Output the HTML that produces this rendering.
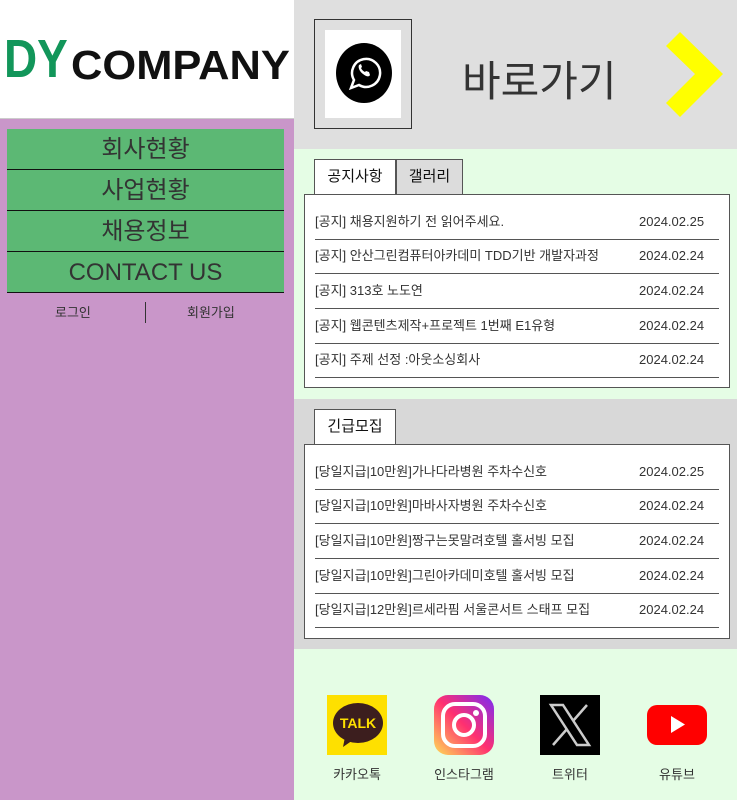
<!DOCTYPE html>
<html><head><meta charset="utf-8"><style>
*{margin:0;padding:0;box-sizing:border-box}
body{width:737px;height:800px;overflow:hidden;font-family:"Liberation Sans","Noto Sans CJK KR",sans-serif;color:#333;position:relative;background:#fff}
.abs{position:absolute}
.menu div{height:41px;border-bottom:1px solid #111;text-align:center;font-size:24px;line-height:42px;color:#333}
.row{position:absolute;left:10px;right:10px;height:35px;border-bottom:1px solid #555;font-size:13px}
.row span{position:absolute;top:9px;line-height:16px;height:16px}
.row .d{left:324px;top:9px}
.tab{position:absolute;height:36px;border:1px solid #555;border-bottom:none;font-size:15px;text-align:center;line-height:34px;color:#111}
.box{position:absolute;left:304px;width:426px;background:#fff;border:1px solid #555}
.lab{position:absolute;top:764px;font-size:13px;width:80px;text-align:center}
</style></head><body>
<div class="abs" style="left:0;top:0;width:294px;height:118px;background:#fff"></div>
<div class="abs" style="left:4px;top:32px;font-size:54px;line-height:54px;font-weight:bold;color:#12965a;transform:scaleX(0.85);transform-origin:0 0">DY</div>
<div class="abs" style="left:71px;top:45px;font-size:41px;line-height:41px;font-weight:bold;color:#111;transform:scaleX(1.06);transform-origin:0 0">COMPANY</div>
<div class="abs" style="left:0;top:118px;width:294px;height:682px;background:#c996c9;border-top:1px solid #ccc"></div>
<div class="abs menu" style="left:7px;top:129px;width:277px;background:#5cb874">
<div>회사현황</div><div>사업현황</div><div>채용정보</div><div>CONTACT US</div></div>
<div class="abs" style="left:55px;top:302px;font-size:13px">로그인</div>
<div class="abs" style="left:145px;top:302px;width:1px;height:21px;background:#333"></div>
<div class="abs" style="left:187px;top:302px;font-size:13px">회원가입</div>

<div class="abs" style="left:294px;top:0;width:443px;height:149px;background:#dfdfdf"></div>
<div class="abs" style="left:314px;top:19px;width:98px;height:110px;border:1px solid #333"></div>
<div class="abs" style="left:325px;top:30px;width:76px;height:88px;background:#fff"></div>
<svg class="abs" style="left:335px;top:42px" width="58" height="62" viewBox="0 0 58 62"><ellipse cx="29" cy="31" rx="28" ry="30" fill="#000"/><path d="M16 46l3-8a14 14 0 1 1 5 5z" fill="none" stroke="#fff" stroke-width="2.5"/><path d="M24 23c-1 2 0 6 4 9s6 3 7 1l-1-3-3-1-1 1c-2-1-3-2-4-4l1-1-1-3z" fill="#fff"/></svg>
<div class="abs" style="left:462px;top:48px;font-size:42px;color:#333">바로가기</div>
<svg class="abs" style="left:666px;top:32px" width="57" height="85"><path d="M0 14L14 0L57 42L14 85L0 71L29 42Z" fill="#ff0"/></svg>

<div class="abs" style="left:294px;top:149px;width:443px;height:250px;background:#e5fde5"></div>
<div class="tab" style="left:314px;top:159px;width:82px;background:#fff;height:37px">공지사항</div>
<div class="tab" style="left:396px;top:159px;width:67px;background:#dcdcdc">갤러리</div>
<div class="box" style="top:194px;height:194px">
<div class="row" style="top:10px"><span>[공지] 채용지원하기 전 읽어주세요.</span><span class="d">2024.02.25</span></div>
<div class="row" style="top:44px"><span>[공지] 안산그린컴퓨터아카데미 TDD기반 개발자과정</span><span class="d">2024.02.24</span></div>
<div class="row" style="top:79px"><span>[공지] 313호 노도연</span><span class="d">2024.02.24</span></div>
<div class="row" style="top:114px"><span>[공지] 웹콘텐츠제작+프로젝트 1번째 E1유형</span><span class="d">2024.02.24</span></div>
<div class="row" style="top:148px"><span>[공지] 주제 선정 :아웃소싱회사</span><span class="d">2024.02.24</span></div>
</div>

<div class="abs" style="left:294px;top:399px;width:443px;height:250px;background:#d8d8d8"></div>
<div class="tab" style="left:314px;top:409px;width:82px;background:#fff;height:37px">긴급모집</div>
<div class="box" style="top:444px;height:195px">
<div class="row" style="top:10px"><span>[당일지급|10만원]가나다라병원 주차수신호</span><span class="d">2024.02.25</span></div>
<div class="row" style="top:44px"><span>[당일지급|10만원]마바사자병원 주차수신호</span><span class="d">2024.02.24</span></div>
<div class="row" style="top:79px"><span>[당일지급|10만원]짱구는못말려호텔 홀서빙 모집</span><span class="d">2024.02.24</span></div>
<div class="row" style="top:114px"><span>[당일지급|10만원]그린아카데미호텔 홀서빙 모집</span><span class="d">2024.02.24</span></div>
<div class="row" style="top:148px"><span>[당일지급|12만원]르세라핌 서울콘서트 스태프 모집</span><span class="d">2024.02.24</span></div>
</div>

<div class="abs" style="left:294px;top:649px;width:443px;height:151px;background:#e5fde5"></div>
<svg class="abs" style="left:327px;top:695px" width="60" height="60"><rect width="60" height="60" fill="#fee000"/><ellipse cx="31" cy="28" rx="25" ry="20" fill="#3c1e1e"/><path d="M18 42l-2 10 10-7z" fill="#3c1e1e"/><text x="31" y="33" font-size="14" font-weight="bold" fill="#fee000" text-anchor="middle" font-family="Liberation Sans">TALK</text></svg>
<svg class="abs" style="left:434px;top:695px" width="60" height="60"><defs><linearGradient id="g" x1="0" y1="1" x2="1" y2="0"><stop offset="0" stop-color="#fd5"/><stop offset=".5" stop-color="#ff3070"/><stop offset="1" stop-color="#7a2cf5"/></linearGradient></defs><rect width="60" height="60" rx="14" fill="url(#g)"/><rect x="9" y="9" width="42" height="42" rx="12" fill="none" stroke="#fff" stroke-width="4"/><circle cx="30" cy="30" r="10" fill="none" stroke="#fff" stroke-width="4"/><circle cx="42" cy="18" r="3" fill="#fff"/></svg>
<svg class="abs" style="left:540px;top:695px" width="60" height="60"><rect width="60" height="60" fill="#000"/><path d="M11 10h12l26 40h-12z" fill="none" stroke="#ccc" stroke-width="2.5"/><path d="M47 10L33 26M13 50l14-16" stroke="#ccc" stroke-width="2.5"/></svg>
<svg class="abs" style="left:647px;top:705px" width="60" height="40"><rect width="60" height="40" rx="10" fill="#f00"/><path d="M24 11v17l14-8.5z" fill="#fff"/></svg>
<div class="lab" style="left:317px">카카오톡</div>
<div class="lab" style="left:424px">인스타그램</div>
<div class="lab" style="left:530px">트위터</div>
<div class="lab" style="left:637px">유튜브</div>
</body></html>
